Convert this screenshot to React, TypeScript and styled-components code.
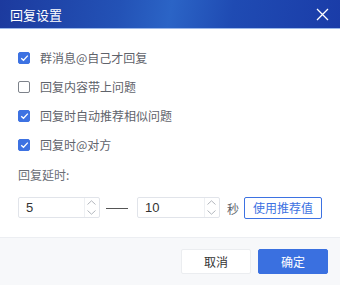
import styled, { createGlobalStyle } from 'styled-components';

const GlobalStyle = createGlobalStyle`
  html, body {
    margin: 0;
    padding: 0;
    background: #ffffff;
  }
  body {
    font-family: "Noto Sans CJK SC", "Noto Sans", sans-serif;
  }
`;

const Dialog = styled.div`
  width: 340px;
  height: 285px;
  display: flex;
  flex-direction: column;
  background: #ffffff;
  overflow: hidden;
`;

const TitleBar = styled.div`
  height: 28px;
  flex: 0 0 28px;
  display: flex;
  align-items: center;
  justify-content: space-between;
  padding: 0 10px;
  background: linear-gradient(100deg, #1c3a9e 0%, #2352b6 35%, #2b64c6 50%, #1f4bb3 68%, #1a3ca8 100%);
  border-bottom: 1px solid #9bb8ea;
  color: #ffffff;
`;

const Title = styled.span`
  font-size: 13px;
`;

const CloseButton = styled.button`
  width: 16px;
  height: 16px;
  padding: 0;
  border: none;
  background: transparent;
  display: flex;
  align-items: center;
  justify-content: center;
  cursor: pointer;
`;

const Body = styled.div`
  flex: 1 1 auto;
  padding: 14px 18px 0 18px;
  display: flex;
  flex-direction: column;
`;

const OptionRow = styled.label`
  height: 29px;
  flex: 0 0 29px;
  display: flex;
  align-items: center;
  gap: 10px;
  font-size: 12px;
  color: #5f636b;
`;

const Box = styled.span<{ $checked: boolean }>`
  width: 12px;
  height: 12px;
  box-sizing: border-box;
  border-radius: 2px;
  display: flex;
  align-items: center;
  justify-content: center;
  background: ${(p) => (p.$checked ? '#3d72e2' : '#ffffff')};
  border: 1px solid ${(p) => (p.$checked ? '#3d72e2' : '#7d828a')};
`;

const DelayLabel = styled.div`
  margin-top: 6px;
  height: 20px;
  flex: 0 0 20px;
  line-height: 20px;
  font-size: 12px;
  color: #6a6e76;
`;

const DelayRow = styled.div`
  margin-top: 12px;
  height: 22px;
  flex: 0 0 22px;
  display: flex;
  align-items: flex-start;
`;

const NumberBox = styled.div<{ $width: number }>`
  width: ${(p) => p.$width}px;
  height: 21px;
  box-sizing: border-box;
  border: 1px solid #e1e4ea;
  border-radius: 2px;
  display: flex;
  align-items: stretch;
`;

const NumberValue = styled.div`
  flex: 1;
  padding-left: 7px;
  display: flex;
  align-items: center;
  font-family: "Liberation Sans", Arial, sans-serif;
  font-size: 13px;
  color: #333;
`;

const Spinner = styled.div`
  width: 14px;
  display: flex;
  flex-direction: column;
  border-left: 1px solid #eef0f3;
`;

const SpinHalf = styled.div`
  flex: 1;
  display: flex;
  align-items: center;
  justify-content: center;
`;

const Dash = styled.span`
  align-self: center;
  width: 22px;
  height: 1px;
  background: #555;
  margin: 0 9px 0 6px;
`;

const Unit = styled.span`
  align-self: center;
  margin: 0 5px 0 7px;
  font-size: 12px;
  color: #5f636b;
`;

const OutlineButton = styled.button`
  height: 22px;
  padding: 0 8px;
  box-sizing: border-box;
  border: 1px solid #3d72e2;
  border-radius: 2px;
  background: #ffffff;
  color: #3d72e2;
  font-family: inherit;
  font-size: 12px;
  line-height: 20px;
`;

const Footer = styled.div`
  height: 48px;
  flex: 0 0 48px;
  box-sizing: border-box;
  border-top: 1px solid #eceef2;
  background: #f7f8fa;
  display: flex;
  align-items: center;
  justify-content: flex-end;
  gap: 7px;
  padding-right: 12px;
`;

const FooterButton = styled.button<{ $primary?: boolean }>`
  width: 70px;
  height: 25px;
  box-sizing: border-box;
  border-radius: 2px;
  font-family: inherit;
  font-size: 12px;
  border: 1px solid ${(p) => (p.$primary ? '#3a70e0' : '#ebedf0')};
  background: ${(p) => (p.$primary ? '#3a70e0' : '#ffffff')};
  color: ${(p) => (p.$primary ? '#ffffff' : '#333333')};
`;

function Check({ checked }: { checked: boolean }) {
  return (
    <Box $checked={checked}>
      {checked && (
        <svg width="9" height="8" viewBox="0 0 9 8">
          <path d="M1.2 4.2 L3.5 6.3 L7.8 1.6" fill="none" stroke="#fff" strokeWidth="1.3" />
        </svg>
      )}
    </Box>
  );
}

function NumberInput({ value, width }: { value: string; width: number }) {
  return (
    <NumberBox $width={width}>
      <NumberValue>{value}</NumberValue>
      <Spinner>
        <SpinHalf>
          <svg width="9" height="5" viewBox="0 0 9 5">
            <path d="M0.5 4.5 L4.5 0.8 L8.5 4.5" fill="none" stroke="#a9aeb6" strokeWidth="0.9" />
          </svg>
        </SpinHalf>
        <SpinHalf>
          <svg width="9" height="5" viewBox="0 0 9 5">
            <path d="M0.5 0.5 L4.5 4.2 L8.5 0.5" fill="none" stroke="#a9aeb6" strokeWidth="0.9" />
          </svg>
        </SpinHalf>
      </Spinner>
    </NumberBox>
  );
}

const options = [
  { text: '群消息@自己才回复', checked: true },
  { text: '回复内容带上问题', checked: false },
  { text: '回复时自动推荐相似问题', checked: true },
  { text: '回复时@对方', checked: true },
];

export default function App() {
  return (
    <>
      <GlobalStyle />
      <Dialog>
        <TitleBar>
          <Title>回复设置</Title>
          <CloseButton aria-label="关闭">
            <svg width="13" height="13" viewBox="0 0 13 13">
              <path d="M1 1 L12 12 M12 1 L1 12" stroke="#ffffff" strokeWidth="1.3" />
            </svg>
          </CloseButton>
        </TitleBar>
        <Body>
          {options.map((o) => (
            <OptionRow key={o.text}>
              <Check checked={o.checked} />
              {o.text}
            </OptionRow>
          ))}
          <DelayLabel>回复延时:</DelayLabel>
          <DelayRow>
            <NumberInput value="5" width={82} />
            <Dash />
            <NumberInput value="10" width={83} />
            <Unit>秒</Unit>
            <OutlineButton>使用推荐值</OutlineButton>
          </DelayRow>
        </Body>
        <Footer>
          <FooterButton>取消</FooterButton>
          <FooterButton $primary>确定</FooterButton>
        </Footer>
      </Dialog>
    </>
  );
}
